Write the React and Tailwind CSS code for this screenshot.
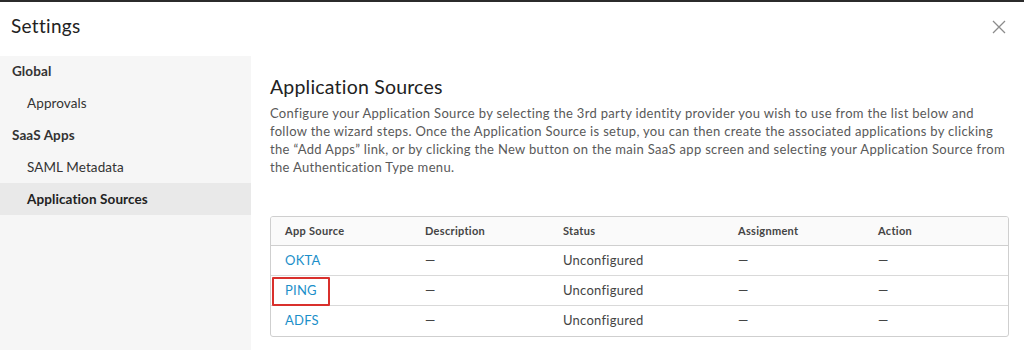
import React from "react";

const rows = ["OKTA", "PING", "ADFS"];

export default function App() {
  return (
    <div className="w-[1024px] h-[350px] overflow-hidden bg-white flex flex-col" style={{ fontFamily: "Lato, 'Open Sans', sans-serif" }}>
      <div className="h-[2px] bg-[#2b2b2b]" />
      <div className="h-[54px] flex items-start justify-between pl-[11px] pr-[18px] pt-[13px]">
        <div className="text-[19px] leading-[22px] text-[#222] tracking-[0.3px]">Settings</div>
        <svg width="14" height="14" viewBox="0 0 14 14" className="text-[#8c8c8c] mt-[5px]">
          <path d="M1 1 L13 13 M13 1 L1 13" stroke="currentColor" strokeWidth="1.3" fill="none" />
        </svg>
      </div>
      <div className="flex flex-1">
        <div className="w-[251px] shrink-0 bg-[#f6f6f6] text-[13.5px] text-[#333] tracking-[0.1px]">
          <div className="h-[31px] flex items-center pl-[12px] font-bold">Global</div>
          <div className="h-[32px] flex items-center pl-[27px]">Approvals</div>
          <div className="h-[32px] flex items-center pl-[12px] font-bold">SaaS Apps</div>
          <div className="h-[32px] flex items-center pl-[27px]">SAML Metadata</div>
          <div className="h-[32px] flex items-center pl-[27px] bg-[#e9e9e9] font-bold text-[#222]">Application Sources</div>
        </div>
        <div className="flex-1 min-w-0 pl-[19px] pt-[18px]">
          <div className="text-[19.5px] text-[#222] leading-[26px] tracking-[0.2px]">Application Sources</div>
          <p className="mt-[4px] text-[13px] leading-[18px] text-[#595959] tracking-[0.32px] w-[750px] whitespace-nowrap">
            Configure your Application Source by selecting the 3rd party identity provider you wish to use from the list below and<br />
            follow the wizard steps. Once the Application Source is setup, you can then create the associated applications by clicking<br />
            the “Add Apps” link, or by clicking the New button on the main SaaS app screen and selecting your Application Source from<br />
            the Authentication Type menu.
          </p>
          <div className="mt-[40px] w-[739px] border border-[#cfcfcf] rounded-[3px] overflow-hidden">
            <div className="h-[29px] bg-[#fafafa] border-b border-[#cfcfcf] flex items-center text-[11px] font-bold text-[#444] tracking-[0.3px]">
              <div className="w-[140px] pl-[14px]">App Source</div>
              <div className="w-[138px] pl-[14px]">Description</div>
              <div className="w-[175px] pl-[14px]">Status</div>
              <div className="w-[140px] pl-[14px]">Assignment</div>
              <div className="pl-[14px]">Action</div>
            </div>
            {rows.map((r, i) => (
              <div key={r} className={"h-[30px] flex items-center text-[13px] text-[#444] tracking-[0.25px] " + (i < rows.length - 1 ? "border-b border-[#d9d9d9]" : "")}>
                <div className="w-[140px] pl-[14px] relative h-full flex items-center">
                  <span className="text-[#1b8fc9]">{r}</span>
                  {r === "PING" && (
                    <div className="absolute left-[1px] top-[1px] w-[58px] h-[29px] border-2 border-[#d9302c] rounded-[1px]" />
                  )}
                </div>
                <div className="w-[138px] pl-[14px]">—</div>
                <div className="w-[175px] pl-[14px]">Unconfigured</div>
                <div className="w-[140px] pl-[14px]">—</div>
                <div className="pl-[14px]">—</div>
              </div>
            ))}
          </div>
        </div>
      </div>
    </div>
  );
}
